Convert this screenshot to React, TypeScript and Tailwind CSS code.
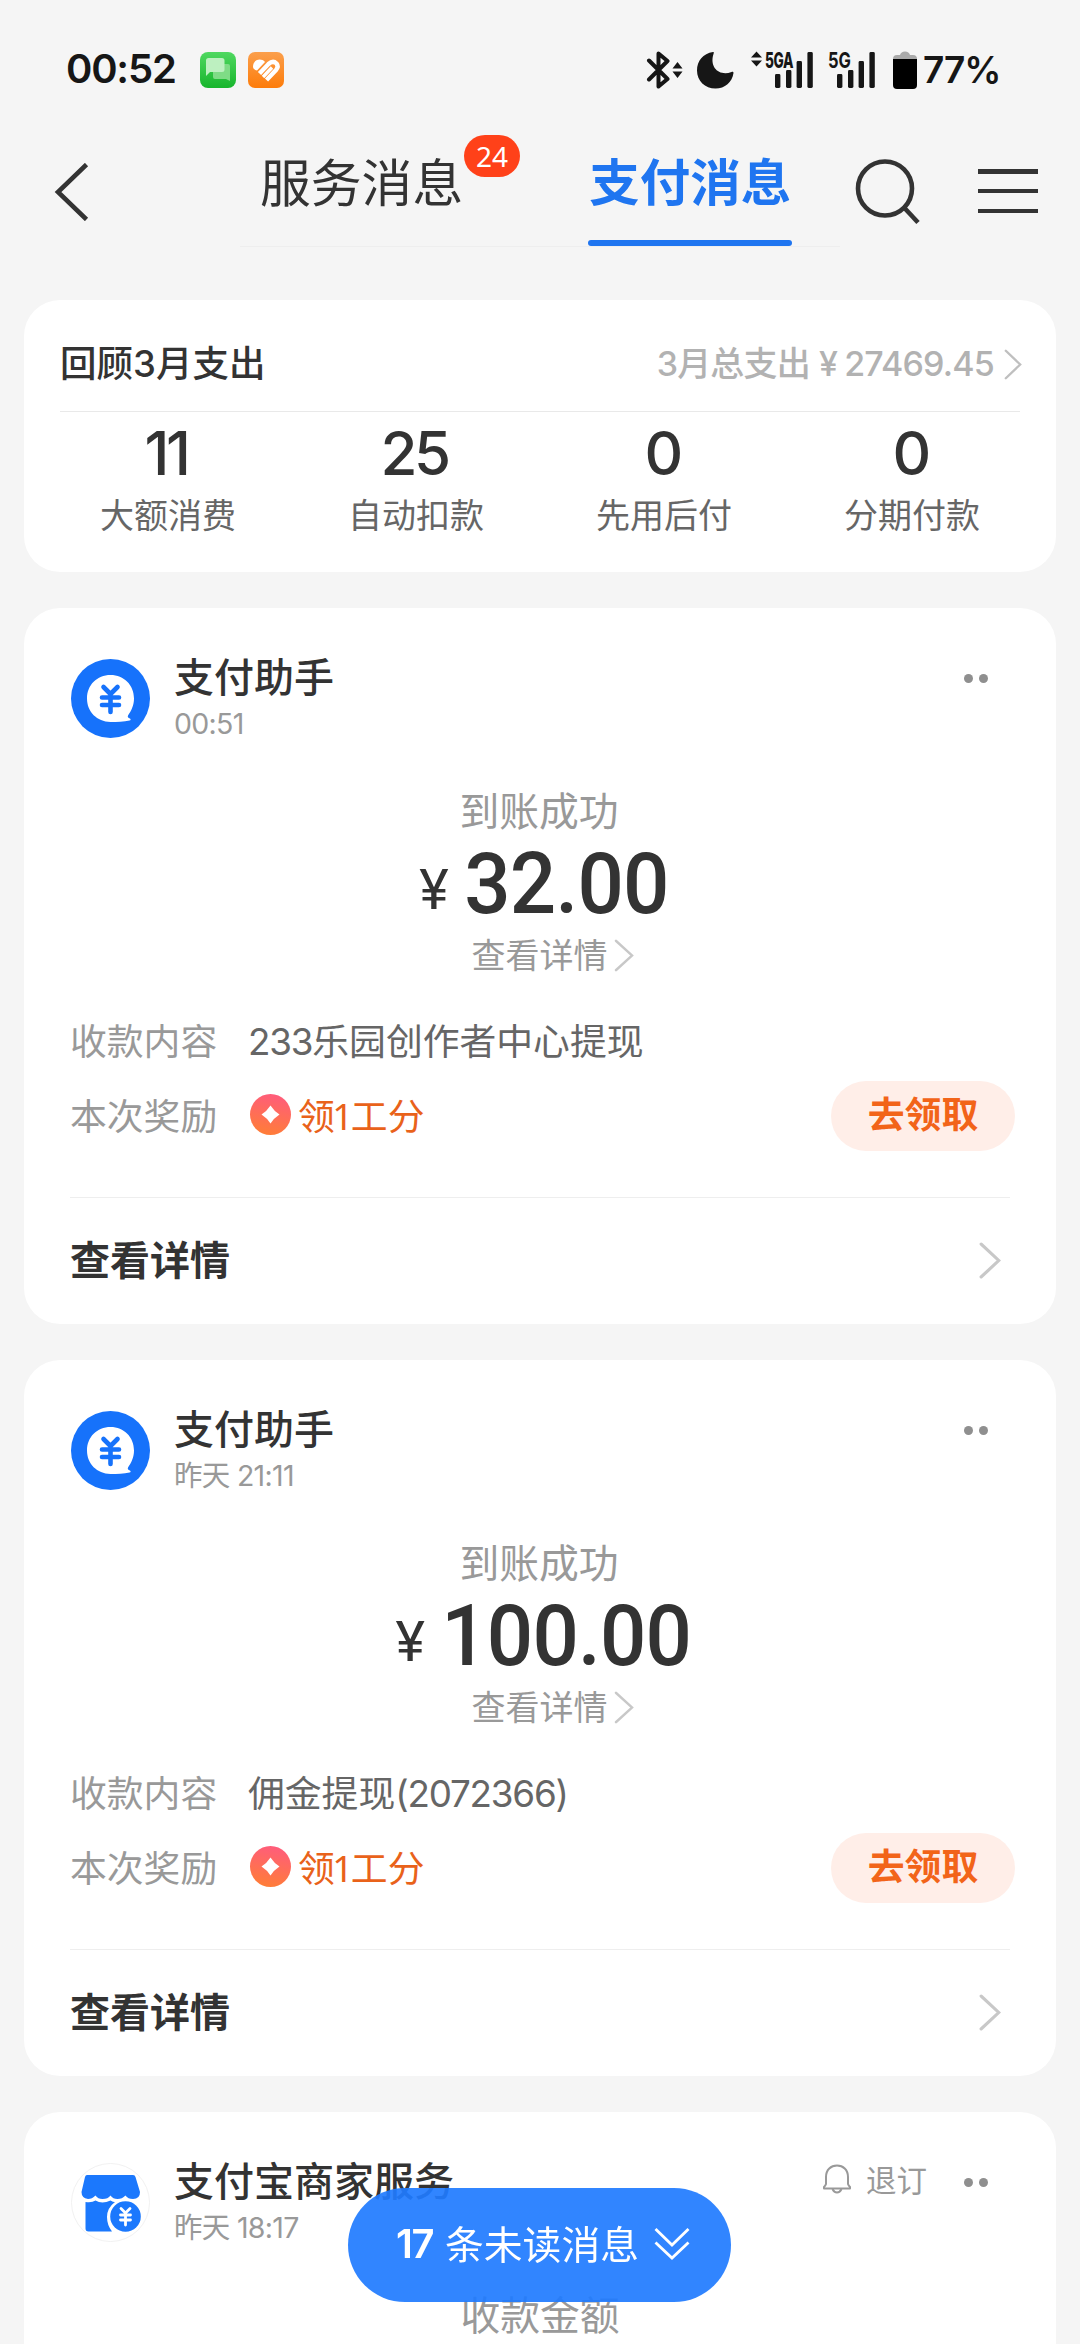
import React from 'react';
import clsx from 'clsx';

const SUMMARY = [
  { value: '11', label: '大额消费' },
  { value: '25', label: '自动扣款' },
  { value: '0', label: '先用后付' },
  { value: '0', label: '分期付款' },
];

const MESSAGES = [
  { time: '00:51', amount: '32.00', content: '233乐园创作者中心提现' },
  { time: '昨天 21:11', amount: '100.00', content: '佣金提现(2072366)' },
];

const SANS = "font-['Noto_Sans','Noto_Sans_CJK_SC',sans-serif]";
const INTER = "font-['Inter','Noto_Sans_CJK_SC',sans-serif]";

interface ChevronProps {
  className?: string;
  color?: string;
  stroke?: number;
}

function Chevron({ className, color = '#c8c8c8', stroke = 2.6 }: ChevronProps) {
  return (
    <svg viewBox="0 0 20 36" fill="none" preserveAspectRatio="none" className={clsx('shrink-0', className)}>
      <path d="M2 2 L18 18 L2 34" stroke={color} strokeWidth={stroke} strokeLinecap="round" />
    </svg>
  );
}

function SignalBars() {
  return (
    <g>
      <rect x="9" y="23" width="5.4" height="14" rx="1.4" />
      <rect x="20" y="19" width="5.4" height="18" rx="1.4" />
      <rect x="30.6" y="10" width="5.4" height="27" rx="1.4" />
      <rect x="41.4" y="1" width="5.4" height="36" rx="1.4" />
    </g>
  );
}

function StatusBar() {
  return (
    <div className={clsx('flex items-center h-[140px] pl-[66px] pr-[80px] text-[#161616]', INTER)}>
      <span className="text-[40px] leading-[48px] font-semibold w-[134px] mt-[-3px] tracking-[-1.2px] whitespace-nowrap">00:52</span>
      <svg className="w-9 h-9" viewBox="0 0 36 36">
        <defs>
          <linearGradient id="green" x1="0" y1="0" x2="0" y2="1">
            <stop offset="0" stopColor="#4fd860" />
            <stop offset="1" stopColor="#17b52c" />
          </linearGradient>
        </defs>
        <rect width="36" height="36" rx="8" fill="url(#green)" />
        <path d="M13 12h15a2 2 0 0 1 2 2v15l-4-2H15a2 2 0 0 1-2-2z" fill="#7fdc86" />
        <path d="M8.500 6h13.500a2.500 2.500 0 0 1 2.500 2.500v9a2.500 2.500 0 0 1-2.500 2.500H10l-4 4V8.500A2.500 2.500 0 0 1 8.500 6z" fill="#bdf0c0" />
      </svg>
      <svg className="w-9 h-9 ml-3" viewBox="0 0 36 36">
        <defs>
          <linearGradient id="orange" x1="0" y1="0" x2="0" y2="1">
            <stop offset="0" stopColor="#fb9f4c" />
            <stop offset="1" stopColor="#fd7c0a" />
          </linearGradient>
        </defs>
        <rect width="36" height="36" rx="7" fill="url(#orange)" />
        <path d="M5 14.500 C5 7.500 13 5.500 17 10 L9 18.500 Q5 17.500 5 14.500z" fill="#fff" />
        <path d="M11.500 21.500 L20.500 12 Q25 8 28.500 11.500 Q31 14.500 28 18 L18.500 28" fill="none" stroke="#fff" strokeWidth="4.400" />
        <path d="M15 25 L24 15.500" stroke="#fff" strokeWidth="3.400" />
      </svg>

      <div className="flex items-center ml-auto">
        <svg className="w-[38px] h-[38px]" viewBox="0 0 38 38" fill="#161616">
          <path d="M3 9.500 L21.500 28 L12.500 35.500 V2.500 L21.500 10 L3 28.500" fill="none" stroke="#161616" strokeWidth="4" strokeLinecap="round" strokeLinejoin="round" />
          <path d="M26.500 17.500 L31.500 11 L36.500 17.500z M26.500 20.500 L31.500 27 L36.500 20.500z" />
        </svg>
        <svg className="w-[38px] h-[38px] ml-[12px]" viewBox="0 0 38 38" fill="#161616">
          <path d="M17 1 C7 2.500 1 10 1 19.500 C1 30 9 37.500 19.500 37.500 C29 37.500 36 31.500 37.500 22 C37.500 20.500 36.500 20.500 35.500 21 C24 25.500 13 17 17.500 3 C18 1.500 18 1 17 1z" />
        </svg>
        <div className="relative w-[64px] h-[38px] ml-[17px]">
          <svg className="w-[64px] h-[38px]" viewBox="0 0 64 38" fill="#161616">
            <path d="M0 6.500 L5.500 0.500 L11 6.500z M0 9.500 L5.500 15.500 L11 9.500z" />
            <g transform="translate(15)">
              <SignalBars />
            </g>
          </svg>
          <span className="absolute left-[14px] top-[-2px] text-[22px] leading-[22px] font-extrabold tracking-[-0.5px] scale-x-[0.62] origin-left whitespace-nowrap">
            5GA
          </span>
        </div>
        <div className="relative w-[50px] h-[38px] ml-[13px]">
          <svg className="w-[50px] h-[38px]" viewBox="0 0 50 38" fill="#161616">
            <SignalBars />
          </svg>
          <span className="absolute left-0 top-[-2px] text-[22px] leading-[22px] font-bold scale-x-[0.75] origin-left">5G</span>
        </div>
        <svg className="w-[24px] h-[39px] ml-[15px]" viewBox="0 0 24 39">
          <path d="M7 4 Q8 0.500 12 0.500 Q16 0.500 17 4 H20 Q24 4 24 8 H0 Q0 4 4 4z" fill="#aaa" />
          <path d="M0 8h24v26a4 4 0 0 1-4 4H4a4 4 0 0 1-4-4z" fill="#000" />
        </svg>
        <span className="text-[37px] leading-[40px] font-semibold ml-[6px] w-[77px] tracking-[-1px] whitespace-nowrap">77%</span>
      </div>
    </div>
  );
}

function NavBar() {
  return (
    <div className={clsx('flex h-[160px] -mt-[10px]', SANS)}>
      <svg className="w-[36px] h-[58px] ml-[53px] mt-[33px]" viewBox="0 0 36 58" fill="none">
        <path d="M33.500 1.500 L5 29 L33.500 56.500" stroke="#333" strokeWidth="4.600" />
      </svg>
      <div className="flex w-[600px] h-[117px] ml-[151px] border-b border-[#eeeeee]">
        <div className="relative ml-[20px] mt-[21px] text-[50.8px] leading-[64px] text-[#333] h-[64px]">
          服务消息
          <span className="absolute left-[204px] top-[-16px] w-[56px] h-[42px] rounded-full bg-[#ff4119] text-white text-[28px] leading-[42px] text-center">
            24
          </span>
        </div>
        <div className="flex flex-col justify-between ml-[125px] w-[204px] pt-[20px] items-center text-[50.5px] leading-[64px] text-[#1f75f0] font-bold">
          支付消息
          <div className="w-[204px] h-[6px] rounded-full bg-[#1f75f0]" />
        </div>
      </div>
      <svg className="w-[66px] h-[68px] ml-[14px] mt-[28px]" viewBox="0 0 66 68" fill="none" stroke="#333" strokeWidth="4.600">
        <circle cx="31" cy="30.500" r="27" />
        <path d="M50.500 50 L64 64.500" />
      </svg>
      <div className="flex flex-col justify-between w-[60px] h-[44px] ml-[58px] mt-[39px]">
        <div className="h-[4.5px] bg-[#333]" />
        <div className="h-[4.5px] bg-[#333]" />
        <div className="h-[4.5px] bg-[#333]" />
      </div>
    </div>
  );
}

function SummaryCard() {
  return (
    <div className="h-[272px] rounded-[36px] bg-white">
      <div className={clsx('flex items-center justify-between h-[112px] mx-[36px] pt-[17px] border-b border-[#e9e9e9]', INTER)}>
        <span className="text-[36.5px] leading-[48px] font-medium text-[#333]">回顾3月支出</span>
        <span className="flex items-center text-[34px] leading-[48px] font-medium text-[#b2b2b2] tracking-[-0.8px] -mr-[2px] whitespace-nowrap">
          3月总支出<span className="ml-[9px] mr-[7px]">¥</span>27469.45
          <Chevron className="w-[18px] h-[31px] ml-[10px]" color="#bfbfbf" />
        </span>
      </div>
      <div className="grid grid-cols-4 mx-[20px] text-center">
        {SUMMARY.map((s) => (
          <div key={s.label} className="flex flex-col">
            <span className={clsx('text-[60px] leading-[60px] mt-[11px] pr-[4px] font-medium text-[#333] tracking-[-3.5px]', INTER)}>{s.value}</span>
            <span className={clsx('text-[34px] leading-[44px] mt-[10px] text-[#666]', SANS)}>{s.label}</span>
          </div>
        ))}
      </div>
    </div>
  );
}

function AssistantAvatar() {
  return (
    <svg className="w-[79px] h-[79px] shrink-0" viewBox="0 0 79 79">
      <circle cx="39.500" cy="39.500" r="39.500" fill="#1672fb" />
      <path d="M39.500 16 C53 16 63 26 63 39.500 C63 46 60.500 51.500 57 56.500 Q56 58.500 59 59.500 Q60.500 61 58.500 61.500 C53 63 46 63 39.500 63 C26 62.500 16 53 16 39.500 C16 26 26 16 39.500 16z" fill="#fff" />
      <path d="M32.500 28 L39.500 35 L46.500 28 M31 38.500 H48 M31 46 H48 M39.500 36 V53" fill="none" stroke="#1672fb" strokeWidth="4.600" strokeLinecap="round" strokeLinejoin="round" />
    </svg>
  );
}

function MerchantAvatar() {
  return (
    <svg className="w-[79px] h-[79px] shrink-0" viewBox="0 0 79 79">
      <circle cx="39.500" cy="39.500" r="39" fill="#fff" stroke="#f1f1f1" />
      <path d="M16 12 H62 Q64 12 64.500 14 L69 29 Q69 36 62 36 Q57 36 54.500 32.500 Q51 36 46.500 36 Q42 36 39.500 32.500 Q37 36 31.500 36 Q27 36 24.500 32.500 Q21 36 17 36 Q10.500 35 10.500 29 L14 14 Q14.500 12 16 12z" fill="#1b78fd" />
      <path d="M14.500 39 Q21 40 24.500 37.500 Q31 41.500 39.500 37.500 Q43 39.500 44 39 Q36 45 36 54 Q36 62 41 68.500 H17.500 Q14.500 68.500 14.500 65.500z" fill="#1b78fd" />
      <circle cx="54.500" cy="53.500" r="15.300" fill="#1b78fd" />
      <path d="M50 45.500 L54.500 50 L59 45.500 M49.500 52 H59.500 M49.500 57 H59.500 M54.500 51 V62" fill="none" stroke="#fff" strokeWidth="2.800" strokeLinecap="round" />
    </svg>
  );
}

interface MessageHeaderProps {
  avatar: React.ReactNode;
  name: string;
  time: string;
  action?: React.ReactNode;
}

function MessageHeader({ avatar, name, time, action }: MessageHeaderProps) {
  return (
    <div className="flex items-start h-[178px] pt-[51px] pl-[47px] pr-[68px]">
      {avatar}
      <div className="flex flex-col ml-[24px] -mt-[8px]">
        <span className={clsx('text-[40px] leading-[52px] font-medium text-[#333]', SANS)}>{name}</span>
        <span className={clsx('text-[28.5px] leading-[36px] mt-[3px] text-[#999] tracking-[-0.7px]', INTER)}>{time}</span>
      </div>
      <div className="flex items-center h-[38px] ml-auto">
        {action}
        <div className="flex gap-[6px]">
          <div className="w-[9px] h-[9px] rounded-full bg-[#8f8f8f]" />
          <div className="w-[9px] h-[9px] rounded-full bg-[#8f8f8f]" />
        </div>
      </div>
    </div>
  );
}

function RewardIcon() {
  return (
    <svg className="w-[41px] h-[41px] -mt-[3px]" viewBox="0 0 41 41">
      <defs>
        <linearGradient id="reward" x1="0.600" y1="0" x2="0.400" y2="1">
          <stop offset="0" stopColor="#ff5c7c" />
          <stop offset="1" stopColor="#ff7d37" />
        </linearGradient>
      </defs>
      <circle cx="20.500" cy="20.500" r="20.500" fill="url(#reward)" />
      <path d="M20.500 11.500 Q24 17 29.500 20.500 Q24 24 20.500 29.500 Q17 24 11.500 20.500 Q17 17 20.500 11.500z" fill="#fff" />
    </svg>
  );
}

// digits and brackets are set tighter than the Chinese text around them
function MixedText({ text }: { text: string }) {
  return (
    <>
      {text.split(/([\d()]+)/).filter(Boolean).map((part) =>
        /^[\d()]+$/.test(part) ? (
          <span key={part} className="font-['Inter',sans-serif] tracking-[-1.2px]">{part}</span>
        ) : (
          <span key={part}>{part}</span>
        )
      )}
    </>
  );
}

function PaymentCard({ time, amount, content }: { time: string; amount: string; content: string }) {
  return (
    <div className={clsx('h-[716px] rounded-[36px] bg-white', SANS)}>
      <MessageHeader avatar={<AssistantAvatar />} name="支付助手" time={time} />
      <div className="flex flex-col items-center text-[#999]">
        <span className="text-[39.8px] leading-[50px] -ml-[2px]">到账成功</span>
        <div className="flex items-baseline h-[97px] pl-[12px] text-[#333] font-['Roboto',sans-serif] font-medium">
          <span className="text-[56px] leading-[97px] font-normal relative top-[-4px] mr-[11px]">¥</span>
          <span className="text-[85px] leading-[97px] tracking-[-0.8px] scale-x-[0.96]">{amount}</span>
        </div>
        <span className="flex items-center text-[34px] leading-[44px] ml-[25px]">
          查看详情
          <Chevron className="w-[20px] h-[33px] ml-[6px]" />
        </span>
      </div>
      <div className="flex items-center h-[50px] mt-[39px] pl-[46px] text-[36.8px] leading-[50px]">
        <span className="w-[178px] text-[#999]">收款内容</span>
        <span className="text-[#666]">
          <MixedText text={content} />
        </span>
      </div>
      <div className="flex items-center h-[70px] mt-[15px] pl-[46px] pr-[41px] text-[36.8px] leading-[50px]">
        <span className="w-[180px] text-[#999]">本次奖励</span>
        <RewardIcon />
        <span className="ml-[7px] text-[#e9621a]">
          领<span className="-mx-[2.5px]">1</span>工分
        </span>
        <button className="w-[184px] h-[70px] ml-auto pb-[4px] rounded-full bg-[#ffeee8] text-[#f26419] font-bold">去领取</button>
      </div>
      <div className="h-px mt-[46px] ml-[46px] mr-[46px] bg-[#eeeeee]" />
      <div className="flex items-center justify-between h-[124px] pl-[46px] pr-[55px]">
        <span className="text-[40px] leading-[50px] font-bold text-[#333]">查看详情</span>
        <Chevron className="w-[22px] h-[37px]" stroke={3} />
      </div>
    </div>
  );
}

function Unsubscribe() {
  return (
    <div className="flex items-center mr-[37px] -mt-[5px] text-[30.5px] leading-[38px] text-[#999]">
      <svg className="w-[28px] h-[30px] mr-[15px] -mt-[2px]" viewBox="0 0 28 30" fill="none" stroke="#999" strokeWidth="2" strokeLinejoin="round">
        <path d="M3 20 V13 C3 5.500 8 1.500 14 1.500 C20 1.500 25 5.500 25 13 V20 Q25.500 21.500 27 23 V24.500 H1 V23 Q2.500 21.500 3 20z" />
        <path d="M9.500 25 Q11 28.500 14 28.500 Q17 28.500 18.500 25" />
      </svg>
      退订
    </div>
  );
}

function UnreadPill() {
  return (
    <button
      className={clsx(
        'fixed left-[348px] top-[2188px] w-[383px] h-[114px] rounded-full bg-[#1f7bff]/92 text-white flex items-center pl-[48px] pb-[2px]',
        SANS
      )}
    >
      <span className="text-[40px] leading-[50px] font-semibold w-[49px] text-left tracking-[-1.5px] font-['Inter',sans-serif]">17</span>
      <span className="text-[38.8px] leading-[50px] whitespace-nowrap">条未读消息</span>
      <svg className="w-[36px] h-[34px] ml-[15px]" viewBox="0 0 36 34" fill="none" stroke="#fff" strokeWidth="2.800">
        <path d="M1.500 2 L18 18 L34.500 2 M1.500 15.500 L18 31 L34.500 15.500" />
      </svg>
    </button>
  );
}

export default function App() {
  return (
    <div className="w-[1080px] h-[2344px] overflow-hidden bg-[#f5f5f5]">
      <StatusBar />
      <NavBar />
      <div className="flex flex-col gap-[36px] px-[24px] mt-[10px]">
        <SummaryCard />
        {MESSAGES.map((m) => (
          <PaymentCard key={m.time} {...m} />
        ))}
        <div className={clsx('h-[300px] rounded-t-[36px] bg-white', SANS)}>
          <MessageHeader avatar={<MerchantAvatar />} name="支付宝商家服务" time="昨天 18:17" action={<Unsubscribe />} />
          <div className="text-center text-[39.8px] leading-[50px] text-[#999]">收款金额</div>
        </div>
      </div>
      <UnreadPill />
    </div>
  );
}
